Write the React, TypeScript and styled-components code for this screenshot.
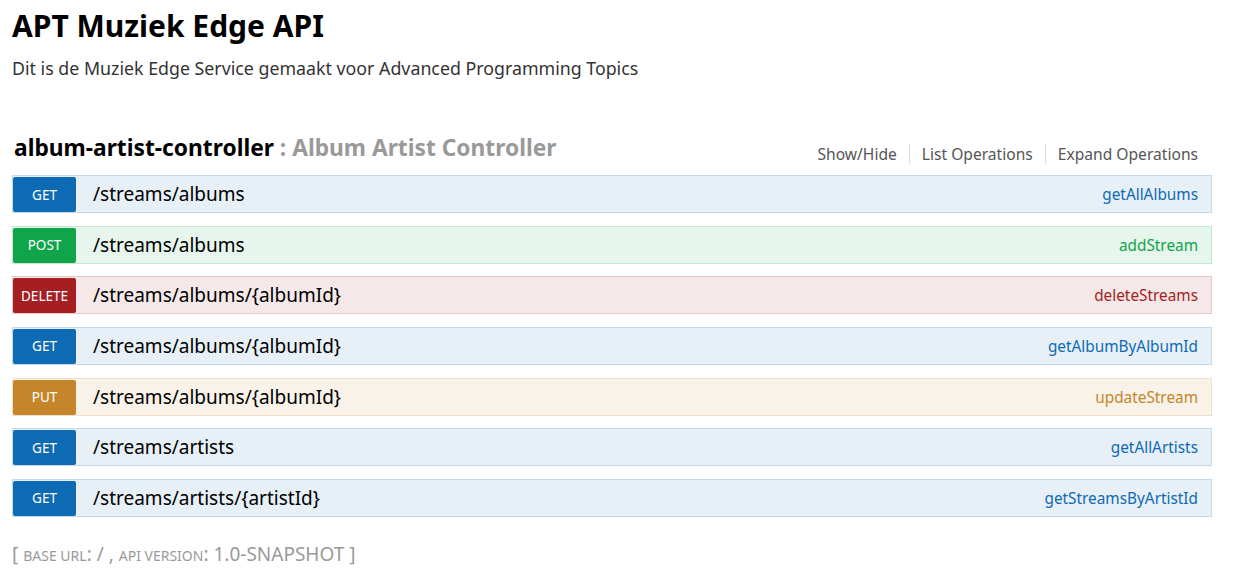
import React from 'react';
import styled, { createGlobalStyle } from 'styled-components';

const GlobalStyle = createGlobalStyle`
	body {
		margin: 0;
		background: #ffffff;
		font-family: 'Noto Sans', 'Open Sans', sans-serif;
	}
`;

type Method = 'get' | 'post' | 'delete' | 'put';

const palette: Record<Method, { bg: string; border: string; main: string }> = {
	get: { bg: '#e7f0f7', border: '#c3d9ec', main: '#0f6ab4' },
	post: { bg: '#e7f6ec', border: '#c3e8d1', main: '#10a54a' },
	delete: { bg: '#f5e8e8', border: '#e8c6c7', main: '#a41e22' },
	put: { bg: '#f9f2e9', border: '#f0e0ca', main: '#c5862b' },
};

const Page = styled.div`
	width: 1200px;
	padding: 0 12px;
`;

const Info = styled.div`
	padding-top: 6px;
	margin-bottom: 46px;
`;

const Title = styled.h1`
	margin: 0;
	font-size: 30px;
	font-weight: bold;
	line-height: 40px;
	color: #000;
`;

const Description = styled.p`
	margin: 10px 0 0;
	font-size: 17.8px;
	line-height: 24px;
	color: #333;
`;

const ResourceHeader = styled.div`
	display: flex;
	align-items: flex-end;
	justify-content: space-between;
	padding: 0 14px 0 2px;
	height: 40px;
	margin-bottom: 9px;
`;

const ResourceName = styled.h2`
	margin: 0 0 3px;
	font-size: 22.75px;
	font-weight: bold;
	line-height: 30px;
	color: #000;

	span {
		color: #999;
	}
`;

const Options = styled.ul`
	display: flex;
	margin: 0;
	padding: 0 0 2px;
	list-style: none;
`;

const Option = styled.li<{ first?: boolean }>`
	font-size: 15.6px;
	line-height: 20px;
	color: #555;
	padding: 0 12px;
	border-left: ${(props) => (props.first ? 'none' : '1px solid #ddd')};

	&:last-child {
		padding-right: 0;
	}
`;

const Operations = styled.div`
	display: flex;
	flex-direction: column;
	gap: 12.67px;
`;

const OperationRow = styled.div<{ method: Method }>`
	display: flex;
	align-items: center;
	height: 38px;
	box-sizing: border-box;
	background: ${(props) => palette[props.method].bg};
	border: 1px solid ${(props) => palette[props.method].border};
	padding-right: 13px;
`;

const Badge = styled.span<{ method: Method }>`
	display: flex;
	align-items: center;
	justify-content: center;
	width: 63px;
	height: 35px;
	margin-top: 1px;
	border-radius: 2px;
	background: ${(props) => palette[props.method].main};
	color: #fff;
	font-size: 13.5px;
	text-transform: uppercase;
`;

const Path = styled.span`
	margin-left: 17px;
	font-size: 19px;
	color: #000;
	flex: 1;
`;

const Nickname = styled.span<{ method: Method }>`
	font-size: 15.35px;
	color: ${(props) => palette[props.method].main};
`;

const Footer = styled.div`
	margin-top: 24px;
	font-size: 19px;
	color: #999;

	small {
		font-size: 14px;
		text-transform: uppercase;
	}
`;

const operations: { method: Method; path: string; nickname: string }[] = [
	{ method: 'get', path: '/streams/albums', nickname: 'getAllAlbums' },
	{ method: 'post', path: '/streams/albums', nickname: 'addStream' },
	{ method: 'delete', path: '/streams/albums/{albumId}', nickname: 'deleteStreams' },
	{ method: 'get', path: '/streams/albums/{albumId}', nickname: 'getAlbumByAlbumId' },
	{ method: 'put', path: '/streams/albums/{albumId}', nickname: 'updateStream' },
	{ method: 'get', path: '/streams/artists', nickname: 'getAllArtists' },
	{ method: 'get', path: '/streams/artists/{artistId}', nickname: 'getStreamsByArtistId' },
];

const App: React.FC = () => {
	return (
		<Page>
			<GlobalStyle />
			<Info>
				<Title>APT Muziek Edge API</Title>
				<Description>
					Dit is de Muziek Edge Service gemaakt voor Advanced Programming Topics
				</Description>
			</Info>
			<ResourceHeader>
				<ResourceName>
					album-artist-controller <span>: Album Artist Controller</span>
				</ResourceName>
				<Options>
					<Option first>Show/Hide</Option>
					<Option>List Operations</Option>
					<Option>Expand Operations</Option>
				</Options>
			</ResourceHeader>
			<Operations>
				{operations.map((op, i) => (
					<OperationRow key={i} method={op.method}>
						<Badge method={op.method}>{op.method}</Badge>
						<Path>{op.path}</Path>
						<Nickname method={op.method}>{op.nickname}</Nickname>
					</OperationRow>
				))}
			</Operations>
			<Footer>
				[ <small>base url</small>: / , <small>api version</small>: 1.0-SNAPSHOT ]
			</Footer>
		</Page>
	);
};

export default App;
